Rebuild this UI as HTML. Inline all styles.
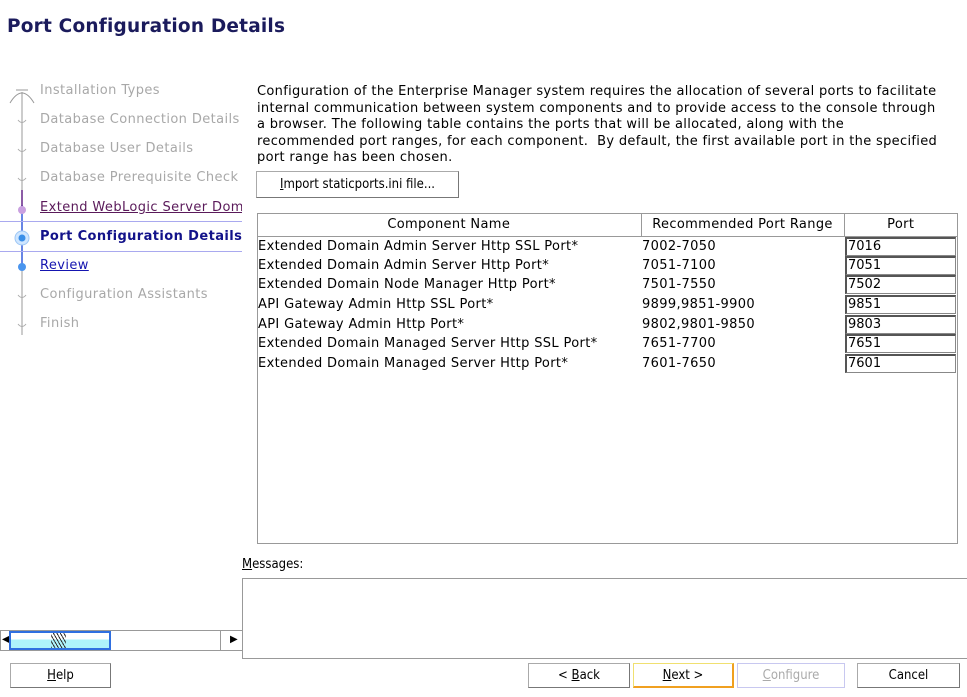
<!DOCTYPE html>
<html><head><style>
*{margin:0;padding:0;box-sizing:border-box}
body{width:967px;height:697px;background:#fff;font-family:"DejaVu Sans","Liberation Sans",sans-serif;font-size:12.5px;color:#000;position:relative;overflow:hidden}
.a{position:absolute;white-space:nowrap}
.title{left:7px;top:16px;font-size:18.5px;font-weight:bold;color:#1b1b5c;letter-spacing:0.2px}
.nav{left:40px;font-size:13px;color:#a8a8a8;letter-spacing:0.4px}
.p{left:257px;font-size:13px;letter-spacing:0.32px;line-height:16.5px;top:84px;white-space:normal;width:688px}
.btn{position:absolute;border:1px solid #aaa;border-right-color:#777;border-bottom-color:#777;background:#fff;text-align:center;font-family:"DejaVu Sans Condensed","DejaVu Sans",sans-serif;font-size:13px;line-height:24px}
table{position:absolute;left:257px;top:213px;width:700px;border-collapse:collapse;font-family:"DejaVu Sans","Liberation Sans",sans-serif;font-size:13px;letter-spacing:0.35px}
td{height:19.6px;padding:0 1px;white-space:nowrap}
th{font-weight:normal;height:23px;border:1px solid #999;border-top:none}
.in{border:1px solid #888;border-top:2px solid #555;border-left:2px solid #555;height:19px;line-height:15px;padding-left:1px;letter-spacing:0}
</style></head><body>
<div class="a title">Port Configuration Details</div>
<svg class="a" style="left:0;top:80px" width="40" height="260">
<path d="M22 12 V255" stroke="#aaa" stroke-width="1.2"/>
<path d="M22 125 V190" stroke="#3a62e0" stroke-width="1.5"/>
<path d="M22 110 V128" stroke="#6b2b8f" stroke-width="1.5"/>
<path d="M10 23 Q22 3 34 23 M16 10 l12 0" stroke="#999" fill="none"/>
<g fill="none" stroke="#aaa"><path d="M18 40 q4 5 8 0"/><path d="M18 69 q4 5 8 0"/><path d="M18 98 q4 5 8 0"/><path d="M18 215 q4 5 8 0"/><path d="M18 244 q4 5 8 0"/></g>
<circle cx="22" cy="130" r="4" fill="#c9a0e0"/>
<circle cx="22" cy="158" r="7" fill="#cfe6ff" stroke="#9cc6f5"/>
<circle cx="22" cy="158" r="3.5" fill="#3a8fe8"/>
<circle cx="22" cy="187" r="4" fill="#4a95ee"/>
</svg>
<div class="a nav" style="top:83px">Installation Types</div>
<div class="a nav" style="top:112px">Database Connection Details</div>
<div class="a nav" style="top:141px">Database User Details</div>
<div class="a nav" style="top:170px">Database Prerequisite Check</div>
<div class="a nav" style="top:200px;color:#5a1a5a;text-decoration:underline;width:202px;overflow:hidden">Extend WebLogic Server Domain</div>
<div class="a" style="left:0;top:221px;width:242px;height:31px;border-top:1px solid #a9a9ef;border-bottom:1px solid #a9a9ef"></div>
<div class="a nav" style="top:229px;color:#12128a;font-weight:bold">Port Configuration Details</div>
<div class="a nav" style="top:258px;color:#1515b0;text-decoration:underline">Review</div>
<div class="a nav" style="top:287px">Configuration Assistants</div>
<div class="a nav" style="top:316px">Finish</div>
<div class="a p">Configuration of the Enterprise Manager system requires the allocation of several ports to facilitate internal communication between system components and to provide access to the console through a browser. The following table contains the ports that will be allocated, along with the recommended port ranges, for each component.&nbsp; By default, the first available port in the specified port range has been chosen.</div>
<div class="btn" style="left:256px;top:171px;width:203px;height:27px;line-height:25px"><u>I</u>mport staticports.ini file...</div>
<div class="a" style="left:257px;top:213px;width:701px;height:331px;border:1px solid #999"></div>
<table>
<colgroup><col style="width:384px"><col style="width:203px"><col style="width:113px"></colgroup>
<tr><th style="border-left:none">Component Name</th><th>Recommended Port Range</th><th style="border-right:none">Port</th></tr>
<tr><td>Extended Domain Admin Server Http SSL Port*</td><td>7002-7050</td><td><div class="in">7016</div></td></tr>
<tr><td>Extended Domain Admin Server Http Port*</td><td>7051-7100</td><td><div class="in">7051</div></td></tr>
<tr><td>Extended Domain Node Manager Http Port*</td><td>7501-7550</td><td><div class="in">7502</div></td></tr>
<tr><td>API Gateway Admin Http SSL Port*</td><td>9899,9851-9900</td><td><div class="in">9851</div></td></tr>
<tr><td>API Gateway Admin Http Port*</td><td>9802,9801-9850</td><td><div class="in">9803</div></td></tr>
<tr><td>Extended Domain Managed Server Http SSL Port*</td><td>7651-7700</td><td><div class="in">7651</div></td></tr>
<tr><td>Extended Domain Managed Server Http Port*</td><td>7601-7650</td><td><div class="in">7601</div></td></tr>
</table>
<div class="a" style="left:242px;top:557px;font-family:'DejaVu Sans Condensed','DejaVu Sans',sans-serif;font-size:13px"><u>M</u>essages:</div>
<div class="a" style="left:242px;top:578px;width:730px;height:81px;border:1px solid #999"></div>
<div class="a" style="left:0;top:630px;width:243px;height:21px;border:1px solid #999;background:#fff"></div>
<div class="a" style="left:2px;top:634px;font-size:10px">◀</div>
<div class="a" style="left:230px;top:634px;font-size:10px">▶</div>
<div class="a" style="left:9px;top:631px;width:102px;height:19px;border:2px solid #2f6fe0;background:linear-gradient(#fff 0,#fff 45%,#aef3fb 45%)"></div>
<div class="a" style="left:51px;top:633px;width:15px;height:15px;background:repeating-linear-gradient(60deg,#333 0 1px,transparent 1px 3px)"></div>
<div class="a" style="left:220px;top:631px;width:1px;height:19px;background:#999"></div>
<div class="btn" style="left:10px;top:663px;width:101px;height:25px"><u>H</u>elp</div>
<div class="btn" style="left:528px;top:663px;width:102px;height:25px">&lt; <u>B</u>ack</div>
<div class="btn" style="left:633px;top:663px;width:101px;height:25px;border-color:#f0e070;border-bottom:2px solid #f0a020;border-right:2px solid #f0a020"><u>N</u>ext &gt;</div>
<div class="btn" style="left:737px;top:663px;width:108px;height:25px;color:#aaa;border-color:#c8c8f0"><u>C</u>onfigure</div>
<div class="btn" style="left:857px;top:663px;width:103px;height:25px">Cancel</div>
</body></html>
